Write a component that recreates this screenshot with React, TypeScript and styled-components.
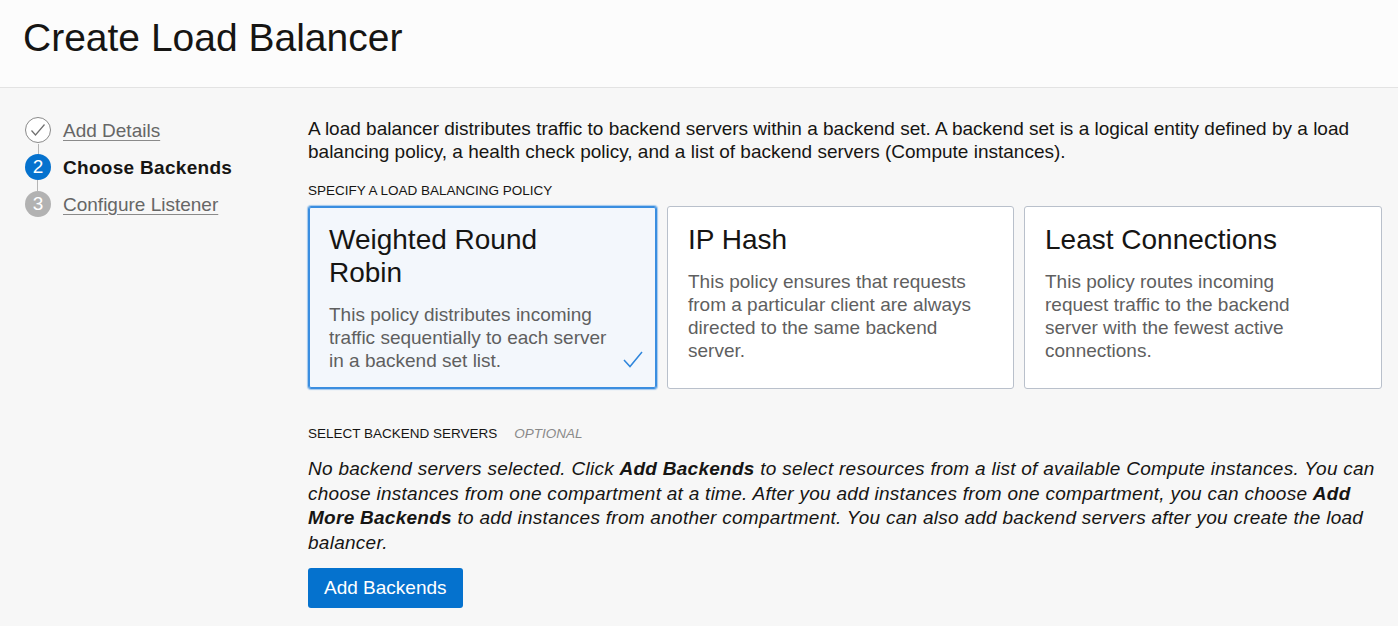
import React from "react";
import styled, { createGlobalStyle, css } from "styled-components";

const GlobalStyle = createGlobalStyle`
  html, body {
    margin: 0;
    padding: 0;
    background: #f7f7f7;
    font-family: "Liberation Sans", Arial, sans-serif;
    color: #161513;
  }
  * { box-sizing: border-box; }
`;

const Page = styled.div`
  width: 1398px;
  min-height: 626px;
  background: #f7f7f7;
`;

const Header = styled.header`
  height: 88px;
  padding: 15px 23px 0;
  background: #fcfcfc;
  border-bottom: 1px solid #e3e3e3;
`;

const Title = styled.h1`
  margin: 0;
  font-size: 39px;
  font-weight: 400;
  line-height: 46px;
  color: #161513;
`;

const Body = styled.div`
  display: grid;
  grid-template-columns: 283px 1074px;
  padding: 29px 0 0 25px;
`;

const Steps = styled.ol`
  list-style: none;
  margin: 0;
  padding: 0;
  display: flex;
  flex-direction: column;
  gap: 11px;
`;

const Step = styled.li`
  display: flex;
  align-items: center;
  gap: 12px;
  height: 26px;
`;

type BadgeKind = "done" | "current" | "todo";

const Badge = styled.span<{ $kind: BadgeKind; $last?: boolean }>`
  position: relative;
  width: 26px;
  height: 26px;
  border-radius: 50%;
  display: flex;
  align-items: center;
  justify-content: center;
  font-size: 19px;
  color: #fff;
  flex: none;
  ${(p) =>
    p.$kind === "done" &&
    css`
      border: 1px solid #8a8a8a;
      background: #fff;
    `}
  ${(p) =>
    p.$kind === "current" &&
    css`
      background: #0572ce;
    `}
  ${(p) =>
    p.$kind === "todo" &&
    css`
      background: #b2b2b2;
    `}
  ${(p) =>
    !p.$last &&
    css`
      &::after {
        content: "";
        position: absolute;
        left: 12px;
        top: 26px;
        width: 1px;
        height: 11px;
        background: #b5b5b5;
      }
    `}
`;

const StepLink = styled.a<{ $current?: boolean }>`
  font-size: 19px;
  line-height: 23px;
  color: ${(p) => (p.$current ? "#161513" : "#666666")};
  font-weight: ${(p) => (p.$current ? 700 : 400)};
  letter-spacing: ${(p) => (p.$current ? "0.3px" : "0")};
  text-decoration: ${(p) => (p.$current ? "none" : "underline")};
  text-underline-offset: 3px;
  text-decoration-color: #8a8a8a;
  cursor: pointer;
`;

const Main = styled.main`
  display: flex;
  flex-direction: column;
`;

const Intro = styled.p`
  margin: 0;
  font-size: 19px;
  line-height: 23px;
  color: #161513;
  width: 1060px;
`;

const SectionLabel = styled.div<{ $mt: number; $mb: number }>`
  margin-top: ${(p) => p.$mt}px;
  margin-bottom: ${(p) => p.$mb}px;
  font-size: 13.5px;
  line-height: 16px;
  text-transform: uppercase;
  color: #161513;
  display: flex;
  gap: 17px;
`;

const Optional = styled.span`
  font-style: italic;
  color: #8a8a8a;
`;

const Cards = styled.div`
  display: grid;
  grid-template-columns: 349px 347px 358px;
  gap: 10px;
`;

const Card = styled.div<{ $selected?: boolean }>`
  position: relative;
  padding: 16px 20px 16px;
  border-radius: 3px;
  border: 1px solid ${(p) => (p.$selected ? "#3a8ee0" : "#b9c0cb")};
  background: ${(p) => (p.$selected ? "#f3f7fc" : "#ffffff")};
  ${(p) =>
    p.$selected &&
    css`
      box-shadow: 0 0 0 1px #3a8ee0 inset, 0 0 1px 1px rgba(58, 142, 224, 0.45);
    `}
  cursor: pointer;
`;

const CardTitle = styled.h2<{ $narrow?: boolean }>`
  margin: 0 0 14px;
  font-size: 28px;
  line-height: 33px;
  font-weight: 400;
  color: #161513;
  max-width: ${(p) => (p.$narrow ? "250px" : "none")};
`;

const CardText = styled.p`
  margin: 0;
  font-size: 19px;
  line-height: 23px;
  color: #5f5f5f;
  max-width: 290px;
`;

const Check = styled.svg`
  position: absolute;
  right: 13px;
  bottom: 20px;
  width: 20px;
  height: 17px;
`;

const Note = styled.p`
  margin: 0;
  font-size: 19px;
  line-height: 24.5px;
  letter-spacing: 0.27px;
  font-style: italic;
  color: #161513;
  width: 1074px;

  b {
    font-weight: 700;
  }
`;

const PrimaryButton = styled.button`
  margin-top: 13px;
  align-self: flex-start;
  height: 40px;
  padding: 0 16px;
  border: none;
  border-radius: 3px;
  background: #0572ce;
  color: #fff;
  font-family: "Liberation Sans", Arial, sans-serif;
  font-size: 19px;
  cursor: pointer;
`;

const CheckGlyph = () => (
  <svg width="16" height="14" viewBox="0 0 16 14" fill="none">
    <path d="M1.5 7.5 L5.5 12 L14.5 1.5" stroke="#6f6f6f" strokeWidth="1.2" />
  </svg>
);

export default function App() {
  return (
    <Page>
      <GlobalStyle />
      <Header>
        <Title>Create Load Balancer</Title>
      </Header>
      <Body>
        <Steps>
          <Step>
            <Badge $kind="done">
              <CheckGlyph />
            </Badge>
            <StepLink>Add Details</StepLink>
          </Step>
          <Step>
            <Badge $kind="current">2</Badge>
            <StepLink $current>Choose Backends</StepLink>
          </Step>
          <Step>
            <Badge $kind="todo" $last>
              3
            </Badge>
            <StepLink>Configure Listener</StepLink>
          </Step>
        </Steps>
        <Main>
          <Intro>
            A load balancer distributes traffic to backend servers within a backend set. A backend set is a
            logical entity defined by a load balancing policy, a health check policy, and a list of backend
            servers (Compute instances).
          </Intro>
          <SectionLabel $mt={20} $mb={7}>
            Specify a load balancing policy
          </SectionLabel>
          <Cards>
            <Card $selected>
              <CardTitle $narrow>Weighted Round Robin</CardTitle>
              <CardText>
                This policy distributes incoming traffic sequentially to each server in a backend set list.
              </CardText>
              <Check viewBox="0 0 20 17" fill="none">
                <path d="M1 9 L7 15.5 L19 1" stroke="#2f86dc" strokeWidth="1.5" />
              </Check>
            </Card>
            <Card>
              <CardTitle>IP Hash</CardTitle>
              <CardText>
                This policy ensures that requests from a particular client are always directed to the same
                backend server.
              </CardText>
            </Card>
            <Card>
              <CardTitle>Least Connections</CardTitle>
              <CardText>
                This policy routes incoming request traffic to the backend server with the fewest active
                connections.
              </CardText>
            </Card>
          </Cards>
          <SectionLabel $mt={37} $mb={15}>
            <span>Select backend servers</span>
            <Optional>Optional</Optional>
          </SectionLabel>
          <Note>
            No backend servers selected. Click <b>Add Backends</b> to select resources from a list of
            available Compute instances. You can choose instances from one compartment at a time. After you
            add instances from one compartment, you can choose <b>Add More Backends</b> to add instances
            from another compartment. You can also add backend servers after you create the load balancer.
          </Note>
          <PrimaryButton>Add Backends</PrimaryButton>
        </Main>
      </Body>
    </Page>
  );
}
